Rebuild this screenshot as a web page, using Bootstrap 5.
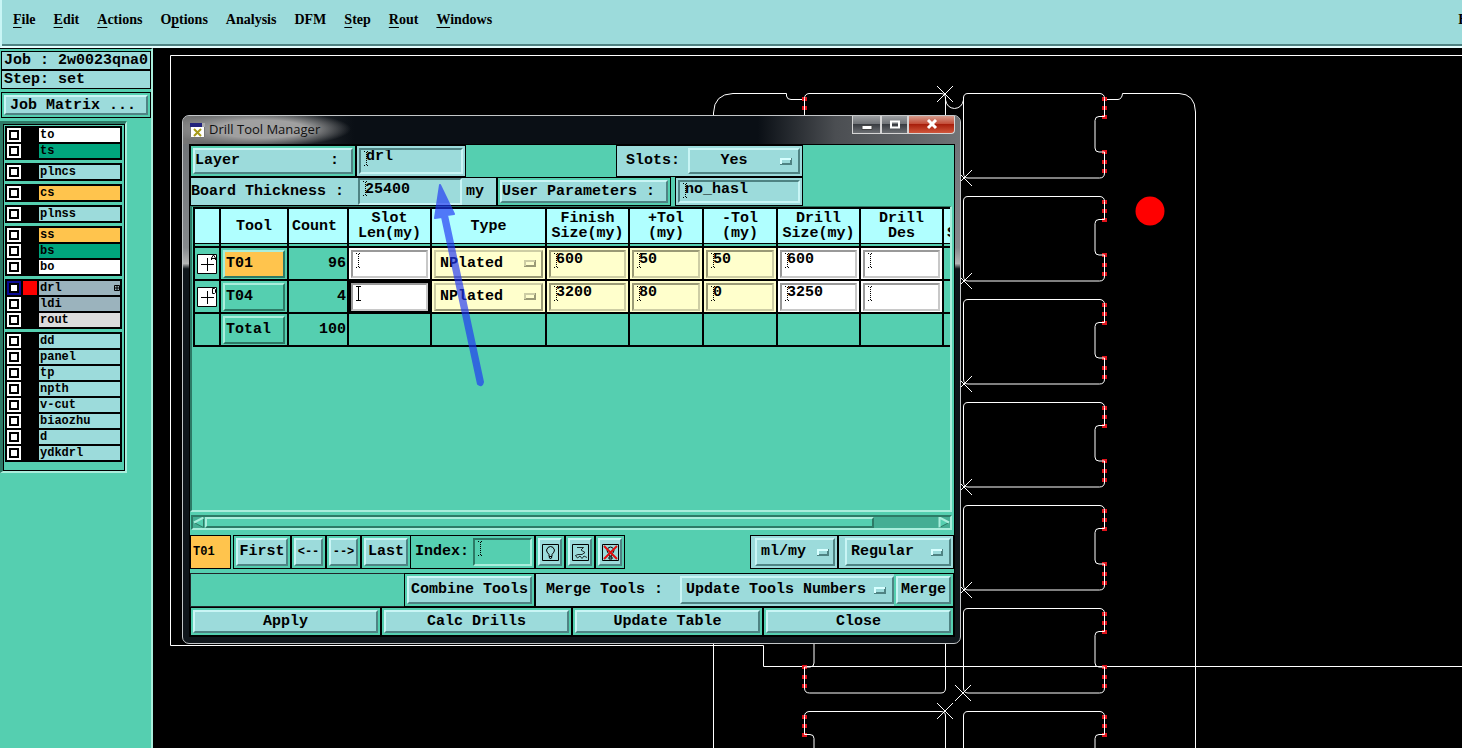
<!DOCTYPE html>
<html lang="en">
<head>
<meta charset="utf-8">
<meta name="viewport" content="width=device-width, initial-scale=1">
<title>Drill Tool Manager</title>
<link rel="stylesheet" href="https://cdn.jsdelivr.net/npm/bootstrap@5.3.0/dist/css/bootstrap.min.css">
<style>
:root{--green:#55cfb0;--teal:#9cdbdb;--lt:#c9f5f5;--dk:#4f8383;--glt:#a9eedc;--gdk:#2d7a66;--orange:#ffc44d;--cream:#ffffcc;--headbg:#b0ffff}
body{background:#000;color:#000;font:bold 15px/18px "Liberation Mono",monospace;overflow:hidden}
button,input,select{font:inherit;color:#000;border-radius:0;margin:0}
a{color:#000;text-decoration:none}
a u{text-underline-offset:3px}
.menubar{height:48px;background:var(--teal);border-left:2px solid var(--lt);border-bottom:2px solid #e4ffff;box-shadow:inset 0 -2px var(--dk);font:bold 14px/18px "Liberation Serif",serif;padding:11px 0 0 11px;gap:18px;overflow:hidden}
.menubar .help-link{margin-right:-25px}
.side{width:153px;background:var(--green);border-right:2px solid var(--glt);border-top:1px solid #000;padding-top:2px}
.line-box{border:1px solid #000;background:var(--teal);height:19px;line-height:18px;padding-left:2px;white-space:nowrap;margin:0 0 0 1px}
.matrix-cell{height:26px;margin:3px 0 3px 1px}
.cell{border:1px solid #000;background:var(--green);padding:2px;display:flex}
.cell.teal{background:var(--teal)}
.key{background:var(--teal);border:2px solid;border-color:var(--lt) var(--dk) var(--dk) var(--lt);padding:0 1px;flex:1 1 auto;white-space:nowrap;line-height:18px}
.key.text-start{padding:0}
.arrow-key{font-size:12px}
.key.icon{padding:0;display:grid;place-items:center}
.pick{appearance:none;background:var(--teal) url("data:image/svg+xml,%3Csvg xmlns='http://www.w3.org/2000/svg' width='12' height='7'%3E%3Cpath fill='%234f8383' d='M0 0h12v7H0z'/%3E%3Cpath fill='%23d8ffff' d='M0 0h11v2H2v4H0z'/%3E%3Cpath fill='%239cdbdb' d='M2 2h8v3H2z'/%3E%3C/svg%3E") no-repeat right 6px center;border:2px solid;border-color:var(--lt) var(--dk) var(--dk) var(--lt);padding:0 0 0 4px;min-width:0}
.entry{background-color:var(--teal);border:2px solid;border-color:var(--dk) var(--lt) var(--lt) var(--dk);padding:0 0 8px 5px;min-width:0;background-repeat:no-repeat;background-position:3px 1px;outline:0;background-image:url("data:image/svg+xml,%3Csvg xmlns='http://www.w3.org/2000/svg' width='5' height='15'%3E%3Cpath d='M0 .5h2M3 .5h2M0 14.5h2M3 14.5h2M2.5 1v13' stroke='%23000' stroke-dasharray='1'/%3E%3C/svg%3E")}
.r2 .entry{padding-bottom:4px}
.entry.solid{background-image:url("data:image/svg+xml,%3Csvg xmlns='http://www.w3.org/2000/svg' width='5' height='15'%3E%3Cpath d='M0 .5h5M0 14.5h5M2.5 1v13' stroke='%23000'/%3E%3C/svg%3E")}
.g-edge{border-color:var(--glt) var(--gdk) var(--gdk) var(--glt);background:var(--green)}
/* layer list */
.layers{border:solid;border-width:3px 2px 2px 3px;border-color:var(--gdk) var(--glt) var(--glt) var(--gdk);width:127px}
.layers>div{border:1px solid #000;padding:1px 2px 8px 1px;gap:3px}
.lgroup{background:#000;padding:2px;gap:2px}
.lrow{height:14px;gap:2px;font-size:12px;line-height:14px}
.lrow input{appearance:none;width:14px;height:14px;border:2px solid #fff;background:#fff;box-shadow:inset 0 0 0 2px #000;flex:none}
.lrow input:checked{border-color:#0b0b96}
.swatch{width:14px;flex:none}
.lrow label{flex:1;background:var(--teal);padding-left:1px}
.c-w label{background:#fff}.c-g label{background:#00a57d}.c-o label{background:var(--orange)}.c-b label{background:#9bb3bd}.c-l label{background:#dcdcdc}
.c-r .swatch{background:#f00}
/* dialog */
.dialog{left:29px;top:67px;width:779px;max-width:calc(100% - 29px);border:1px solid #c3c6c8;border-radius:7px;background:linear-gradient(#6a6e72,#86898c 25%,#b5b5b5 28%,#10161b 29%,#10161b);padding:0 5px 6px 6px}
.titlebar{height:28px;margin:0 -5px 0 -6px;padding:0 5px 0 7px;border-radius:6px 6px 0 0;background:radial-gradient(ellipse 90px 18px at 78px 13px,#a0a0a0 50%,transparent),linear-gradient(90deg,#777 0,#33373b 12%,#0a0f15 22%,#0a0f15 74%,#4b4e52 84%,#707376);font:13px/26px "Open Sans",sans-serif;color:#111}
.winbtn{height:18px;border:1px solid #d5d5d5;border-top:0;background:linear-gradient(#9a9da0,#6f7276 48%,#3a3d42 50%,#6c6f73);padding:0;display:grid;place-items:center}
.winbtn.red{background:linear-gradient(#d59a8b,#c34a35 48%,#a81f0c 50%,#d0573c);border-radius:0 0 4px 0}
.client{background:var(--green);border:1px solid #000}
.r1{height:32px}.r2{height:29px}.r3{height:34px}
.gridpane{height:306px;margin-right:2px;border:solid;border-width:1px 2px 2px;border-color:var(--gdk) var(--glt) var(--glt) var(--gdk);padding-left:1px;overflow:hidden}
.tools{table-layout:fixed;width:829px;border-collapse:collapse}
.tools th,.tools td{border:2px solid #000;padding:0}
.tools th{height:39px;text-align:center;line-height:15px;background:linear-gradient(to top,var(--green) 2px,#000 2px,#000 3px,var(--headbg) 3px);padding-bottom:3px}
.tools th.text-start{padding-left:3px}
.tools td{height:33px}
.tools td.num{text-align:right;padding-right:1px}
.tools .key,.tools .pick,.tools .entry{display:block;height:28px;text-align:left}
.tools .key,.tools .entry,.tools .pick{width:calc(100% - 4px);margin:0 2px}
.w{background:#fff}.y{background:var(--cream)}
.w .entry{background-color:#fff;border-color:#999 #c8c8c8 #c8c8c8 #999}
.y .entry{background-color:var(--cream);border-color:#9a9a76 #cdcda4 #cdcda4 #9a9a76}
.y .pick{background-color:var(--cream);border-color:#cdcda4 #9a9a76 #9a9a76 #cdcda4;background-image:url("data:image/svg+xml,%3Csvg xmlns='http://www.w3.org/2000/svg' width='12' height='7'%3E%3Cpath fill='%239a9a76' d='M0 0h12v7H0z'/%3E%3Cpath fill='%23cdcda4' d='M0 0h11v2H2v4H0z'/%3E%3Cpath fill='%23ffffcc' d='M2 2h8v3H2z'/%3E%3C/svg%3E");background-position:right 5px center}
.focus-cell{background:#fff;box-shadow:inset 0 0 0 2px #000}
.plus{border:0;background:none;padding:0;display:block;margin:0 auto}
.scroll{height:15px;border:solid;border-width:2px;border-color:var(--gdk) var(--glt) var(--glt) var(--gdk);background:#45ae94;margin:3px 2px 5px 1px}
.thumb{width:669px;border:2px solid;border-color:var(--glt) var(--gdk) var(--gdk) var(--glt);background:var(--green)}
</style>
</head>
<body class="vh-100 d-flex flex-column">
<nav class="menubar d-flex flex-shrink-0">
<a href="#"><u>F</u>ile</a><a href="#"><u>E</u>dit</a><a href="#"><u>A</u>ctions</a><a href="#">O<u>p</u>tions</a><a href="#">Analysis</a><a href="#">DFM</a><a href="#"><u>S</u>tep</a><a href="#"><u>R</u>out</a><a href="#"><u>W</u>indows</a><a href="#" class="help-link ms-auto">Help</a>
</nav>
<div class="d-flex flex-grow-1">
<aside class="side flex-shrink-0">
<div class="line-box">Job : 2w0023qna0</div>
<div class="line-box">Step: set</div>
<div class="cell matrix-cell"><button class="key text-start ps-1">Job Matrix ...</button></div>
<div class="layers"><div class="d-flex flex-column" id="layers"></div></div>
</aside>
<main class="flex-grow-1 position-relative overflow-hidden">
<svg class="position-absolute top-0 start-0 w-100 h-100" aria-hidden="true">
<defs>
<g id="pads" fill="#e0141c"><path d="M-2 4h5v4h-5zM-2 13h5v4h-5zM-2 22h5v4h-5zM-2 57h5v4h-5zM-2 67h5v4h-5zM-2 76h5v4h-5z"/></g>
<g id="unit"><use href="#pads" x="141" stroke="none"/><path d="M5 .5H137Q141.500 1 141.500 5.500V23.500H136q-4 0-4 4V55q0 4 4 4h5.500V80q0 5-5 5H5Q.5 85 .5 80V5Q.5.5 5 .5Z"/></g>
<path id="xm" d="M-8-8 8 8M-8 8 8-8"/>
</defs>
<g transform="translate(-153 -48)" fill="none" stroke="#fff">
<path d="M1500 55.500H170.500V645.500H763.500V666.500H1500"/>
<path d="M713.500 800V113Q714 94 733 93.500H786.500V96Q787 99.500 791 99.500H804M1104 99.500H1118Q1122 99 1122.500 93.500H1179Q1195 94 1195.500 112V800M945.500 97V100Q947 108 954.500 108.500Q962 108 963.500 100V97"/>
<g id="column"><use href="#unit" x="963" y="93"/><use href="#unit" x="963" y="196"/><use href="#unit" x="963" y="299"/><use href="#unit" x="963" y="402"/><use href="#unit" x="963" y="505"/><use href="#unit" x="963" y="608"/><use href="#unit" x="963" y="711"/></g>
<use href="#column" transform="matrix(-1 0 0 1 1909 0)"/>
<use href="#xm" x="945" y="94"/><use href="#xm" x="963" y="693"/><use href="#xm" x="945" y="711"/><use href="#xm" x="964" y="178"/><use href="#xm" x="964" y="281"/><use href="#xm" x="964" y="384"/><use href="#xm" x="964" y="487"/><use href="#xm" x="964" y="590"/>
<circle cx="1150" cy="211" r="14.500" fill="#f00" stroke="none"/>
</g>
</svg>

<section class="dialog position-absolute">
<header class="titlebar d-flex">
<svg width="15" height="15" class="me-1 align-self-center flex-shrink-0"><path d="M.5 1h14v13.500H.5z" fill="#fff" stroke="#777"/><path d="M0 0h12v4H0z" fill="#22227c"/><path d="M12 0h3v4h-3z" fill="#aaa"/><path d="m4 6 7 7M11 6l-7 7" stroke="#a69a18" stroke-width="2"/></svg>
<span>Drill Tool Manager</span>
<div class="d-flex ms-auto">
<button class="winbtn" style="width:29px" aria-label="Minimize"><svg width="12" height="12"><path d="M1 6.500h10v4H1z" fill="#fff" stroke="#444"/></svg></button>
<button class="winbtn" style="width:27px" aria-label="Maximize"><svg width="12" height="10"><path d="M2 1.500h8v6H2z" fill="none" stroke="#fff" stroke-width="2"/></svg></button>
<button class="winbtn red" style="width:47px" aria-label="Close window"><svg width="12" height="11"><path d="m2 1 8 8M10 1l-8 8" stroke="#fff" stroke-width="3"/></svg></button>
</div>
</header>
<div class="client">
<div class="d-flex r1">
<div class="cell" style="width:166px"><button class="key text-start" style="white-space:pre">Layer          :</button></div>
<div class="cell teal" style="width:110px"><input class="entry w-100" value="drl" aria-label="Layer name"></div>
<div class="cell teal align-items-stretch" style="width:187px;margin-left:150px"><label for="slots" class="align-self-center ps-2" style="margin-left:-1px">Slots:</label><select id="slots" class="pick flex-grow-1 ms-2 text-center pe-4"><option>Yes</option><option>No</option></select></div>
</div>
<div class="d-flex r2">
<div class="cell teal p-0" style="width:307px"><label for="thick" class="align-self-center text-nowrap">Board Thickness :</label><input id="thick" class="entry" style="width:104px;margin-left:14px" value="25400"><span class="align-self-center ms-1">my</span></div>
<div class="cell" style="width:174px"><button class="key text-start">User Parameters :</button></div>
<div class="cell teal ms-1" style="width:128px"><input class="entry w-100" value="no_hasl" aria-label="User parameters"></div>
</div>
<div class="gridpane">
<table class="tools">
<colgroup><col style="width:26px"><col style="width:68px"><col style="width:60px"><col style="width:83px"><col style="width:115px"><col style="width:83px"><col style="width:74px"><col style="width:74px"><col style="width:83px"><col style="width:83px"><col></colgroup>
<thead><tr><th></th><th>Tool</th><th class="text-start">Count</th><th>Slot<br>Len(my)</th><th>Type</th><th>Finish<br>Size(my)</th><th>+Tol<br>(my)</th><th>-Tol<br>(my)</th><th>Drill<br>Size(my)</th><th>Drill<br>Des</th><th class="text-start"><br>Size(my)</th></tr></thead>
<tbody>
<tr><td><button class="plus" aria-label="Mark T01"><svg width="20" height="20" fill="none" stroke="#000"><path d="M.5.500h19v19H.5z" fill="#fff"/><path d="M10.500 4v13M4 10.500h13"/><path d="M14.500 6V4l2-3 2 3v2M15 4.500h4"/></svg></button></td><td><button class="key g-edge" style="background:var(--orange)">T01</button></td><td class="num">96</td><td class="w"><input class="entry" aria-label="T01 slot length"></td><td class="y"><select class="pick" aria-label="T01 type"><option>NPlated</option><option>Plated</option></select></td><td class="y"><input class="entry" value="600" aria-label="T01 finish size"></td><td class="y"><input class="entry" value="50" aria-label="T01 plus tolerance"></td><td class="y"><input class="entry" value="50" aria-label="T01 minus tolerance"></td><td class="w"><input class="entry" value="600" aria-label="T01 drill size"></td><td class="w"><input class="entry" aria-label="T01 designator"></td><td></td></tr>
<tr><td><button class="plus" aria-label="Mark T04"><svg width="20" height="20" fill="none" stroke="#000"><path d="M.5.500h19v19H.5z" fill="#fff"/><path d="M10.500 4v13M4 10.500h13"/><path d="M15.500 1.500h2l1 1v3l-1 1h-2z"/></svg></button></td><td><button class="key g-edge">T04</button></td><td class="num">4</td><td class="w focus-cell"><input class="entry solid" aria-label="T04 slot length"></td><td class="y"><select class="pick" aria-label="T04 type"><option>NPlated</option><option>Plated</option></select></td><td class="y"><input class="entry" value="3200" aria-label="T04 finish size"></td><td class="y"><input class="entry" value="80" aria-label="T04 plus tolerance"></td><td class="y"><input class="entry" value="0" aria-label="T04 minus tolerance"></td><td class="w"><input class="entry" value="3250" aria-label="T04 drill size"></td><td class="w"><input class="entry" aria-label="T04 designator"></td><td></td></tr>
<tr><td></td><td><button class="key g-edge">Total</button></td><td class="num">100</td><td></td><td></td><td></td><td></td><td></td><td></td><td></td><td></td></tr>
</tbody>
</table>
</div>
<div class="scroll d-flex">
<svg width="12" height="11" class="flex-shrink-0"><path d="M10.500.5v10L1 5.500z" fill="#55cfb0" stroke="#2d7a66"/><path d="M10.500.5 1 5.500" stroke="#a9eedc" stroke-width="2"/></svg>
<div class="thumb"></div>
<svg width="12" height="11" class="ms-auto flex-shrink-0"><path d="M1.500 10.500V.5L11 5.500z" fill="#55cfb0" stroke="#2d7a66"/><path d="M1.500 10.500V.5L11 5.500" fill="none" stroke="#a9eedc" stroke-width="2"/></svg>
</div>
<div class="d-flex r3">
<div class="cell align-items-center" style="width:41px;background:var(--orange);font-size:12px">T01</div>
<div class="cell" style="width:58px;margin-left:2px"><button class="key">First</button></div>
<div class="cell" style="width:35px"><button class="key arrow-key px-0">&lt;--</button></div>
<div class="cell" style="width:35px"><button class="key arrow-key px-0">--&gt;</button></div>
<div class="cell" style="width:50px"><button class="key px-0">Last</button></div>
<div class="cell ps-1 border-start-0" style="width:124px"><label for="idx" class="align-self-center">Index:</label><input id="idx" class="entry ms-1" style="width:60px;background-color:var(--green);border-color:var(--gdk) var(--glt) var(--glt) var(--gdk)"></div>
<div class="cell" style="width:30px"><button class="key icon" aria-label="Highlight"><svg width="17" height="17" fill="none" stroke="#000"><path d="M.5.500h16v16H.5z"/><path d="M7 12.500v-2Q4.500 8 4.500 6q1-3.500 4-3.500t4 3.500q0 2-2.500 4.500v2zM7 13l1.500 2 1.500-2"/></svg></button></div>
<div class="cell" style="width:30px"><button class="key icon" aria-label="Zoom"><svg width="17" height="17" fill="none" stroke="#000" stroke-width=".8"><path d="M.5.500h16v16H.5z" stroke-width="1"/><path d="M5 3.500h6.500L9 6l4 2.500-3 2H6l-2.500 1 2 2.500L8 12l2 2.500 2-2.500 3 1.500"/></svg></button></div>
<div class="cell" style="width:30px"><button class="key icon" aria-label="Clear highlight"><svg width="17" height="17" fill="none" stroke="#000"><path d="M.5.500h16v16H.5z"/><path d="M7 12v-2Q5 8 5 6q1-3 3.500-3T12 6q0 2-2 4v2zM7 13h3v2H7z"/><path d="m2 2 13 13M15 2 2 15" stroke="#e01010" stroke-width="2"/></svg></button></div>
<div class="cell teal ms-auto ps-1" style="width:88px"><select class="pick w-100" style="background-position:right 4px center" aria-label="Units"><option>ml/my</option><option>inch</option></select></div>
<div class="cell teal" style="width:116px;padding-left:6px"><select class="pick w-100" aria-label="Mode"><option>Regular</option></select></div>
</div>
<div class="d-flex r3 mt-1">
<div class="flex-grow-1 border border-end-0 border-dark"></div>
<div class="cell" style="width:131px"><button class="key px-0">Combine Tools</button></div>
<div class="cell teal pe-0 border-end-0" style="width:359px"><label for="merge" class="align-self-center text-nowrap ps-2">Merge Tools :</label><select id="merge" class="pick ms-auto" style="width:214px"><option>Update Tools Numbers</option></select></div>
<div class="cell border-start-0" style="width:60px"><button class="key px-0">Merge</button></div>
</div>
<div class="row g-0 r2">
<div class="col cell"><button class="key">Apply</button></div><div class="col cell"><button class="key">Calc Drills</button></div><div class="col cell"><button class="key">Update Table</button></div><div class="col cell"><button class="key">Close</button></div>
</div>
</div>
</section>
<svg class="position-absolute top-0 start-0 pe-none" width="340" height="345" aria-hidden="true"><g fill="#1f35f5" stroke="#1f35f5" opacity=".66"><path d="M287 137 301 166 294 167 330 334Q329 339 325 336L289 169 282 170Z" stroke-width="2" stroke-linejoin="round"/></g></svg>
</main>
</div>
<script src="https://cdn.jsdelivr.net/npm/bootstrap@5.3.0/dist/js/bootstrap.bundle.min.js"></script>
<script>
const groups = [
  [['to','w'],['ts','g']], [['plncs','']], [['cs','o']], [['plnss','']],
  [['ss','o'],['bs','g'],['bo','w']],
  [['drl','b c-r'],['ldi','b'],['rout','l']],
  [['dd',''],['panel',''],['tp',''],['npth',''],['v-cut',''],['biaozhu',''],['d',''],['ydkdrl','']]
];
const grid = '<svg class="float-end mt-1" width="6" height="6"><path d="M.5.500h5v5h-5zM3 0v6M0 3h6" fill="none" stroke="#000"/></svg>';
document.getElementById('layers').innerHTML = groups.map(g =>
  '<div class="lgroup d-flex flex-column">' + g.map(([n, c]) =>
    `<div class="lrow d-flex ${c ? 'c-' + c : ''}"><input type="checkbox" id="l-${n}" ${n === 'drl' ? 'checked' : ''}><span class="swatch"></span><label for="l-${n}">${n}${n === 'drl' ? grid : ''}</label></div>`
  ).join('') + '</div>').join('');
</script>
</body>
</html>
